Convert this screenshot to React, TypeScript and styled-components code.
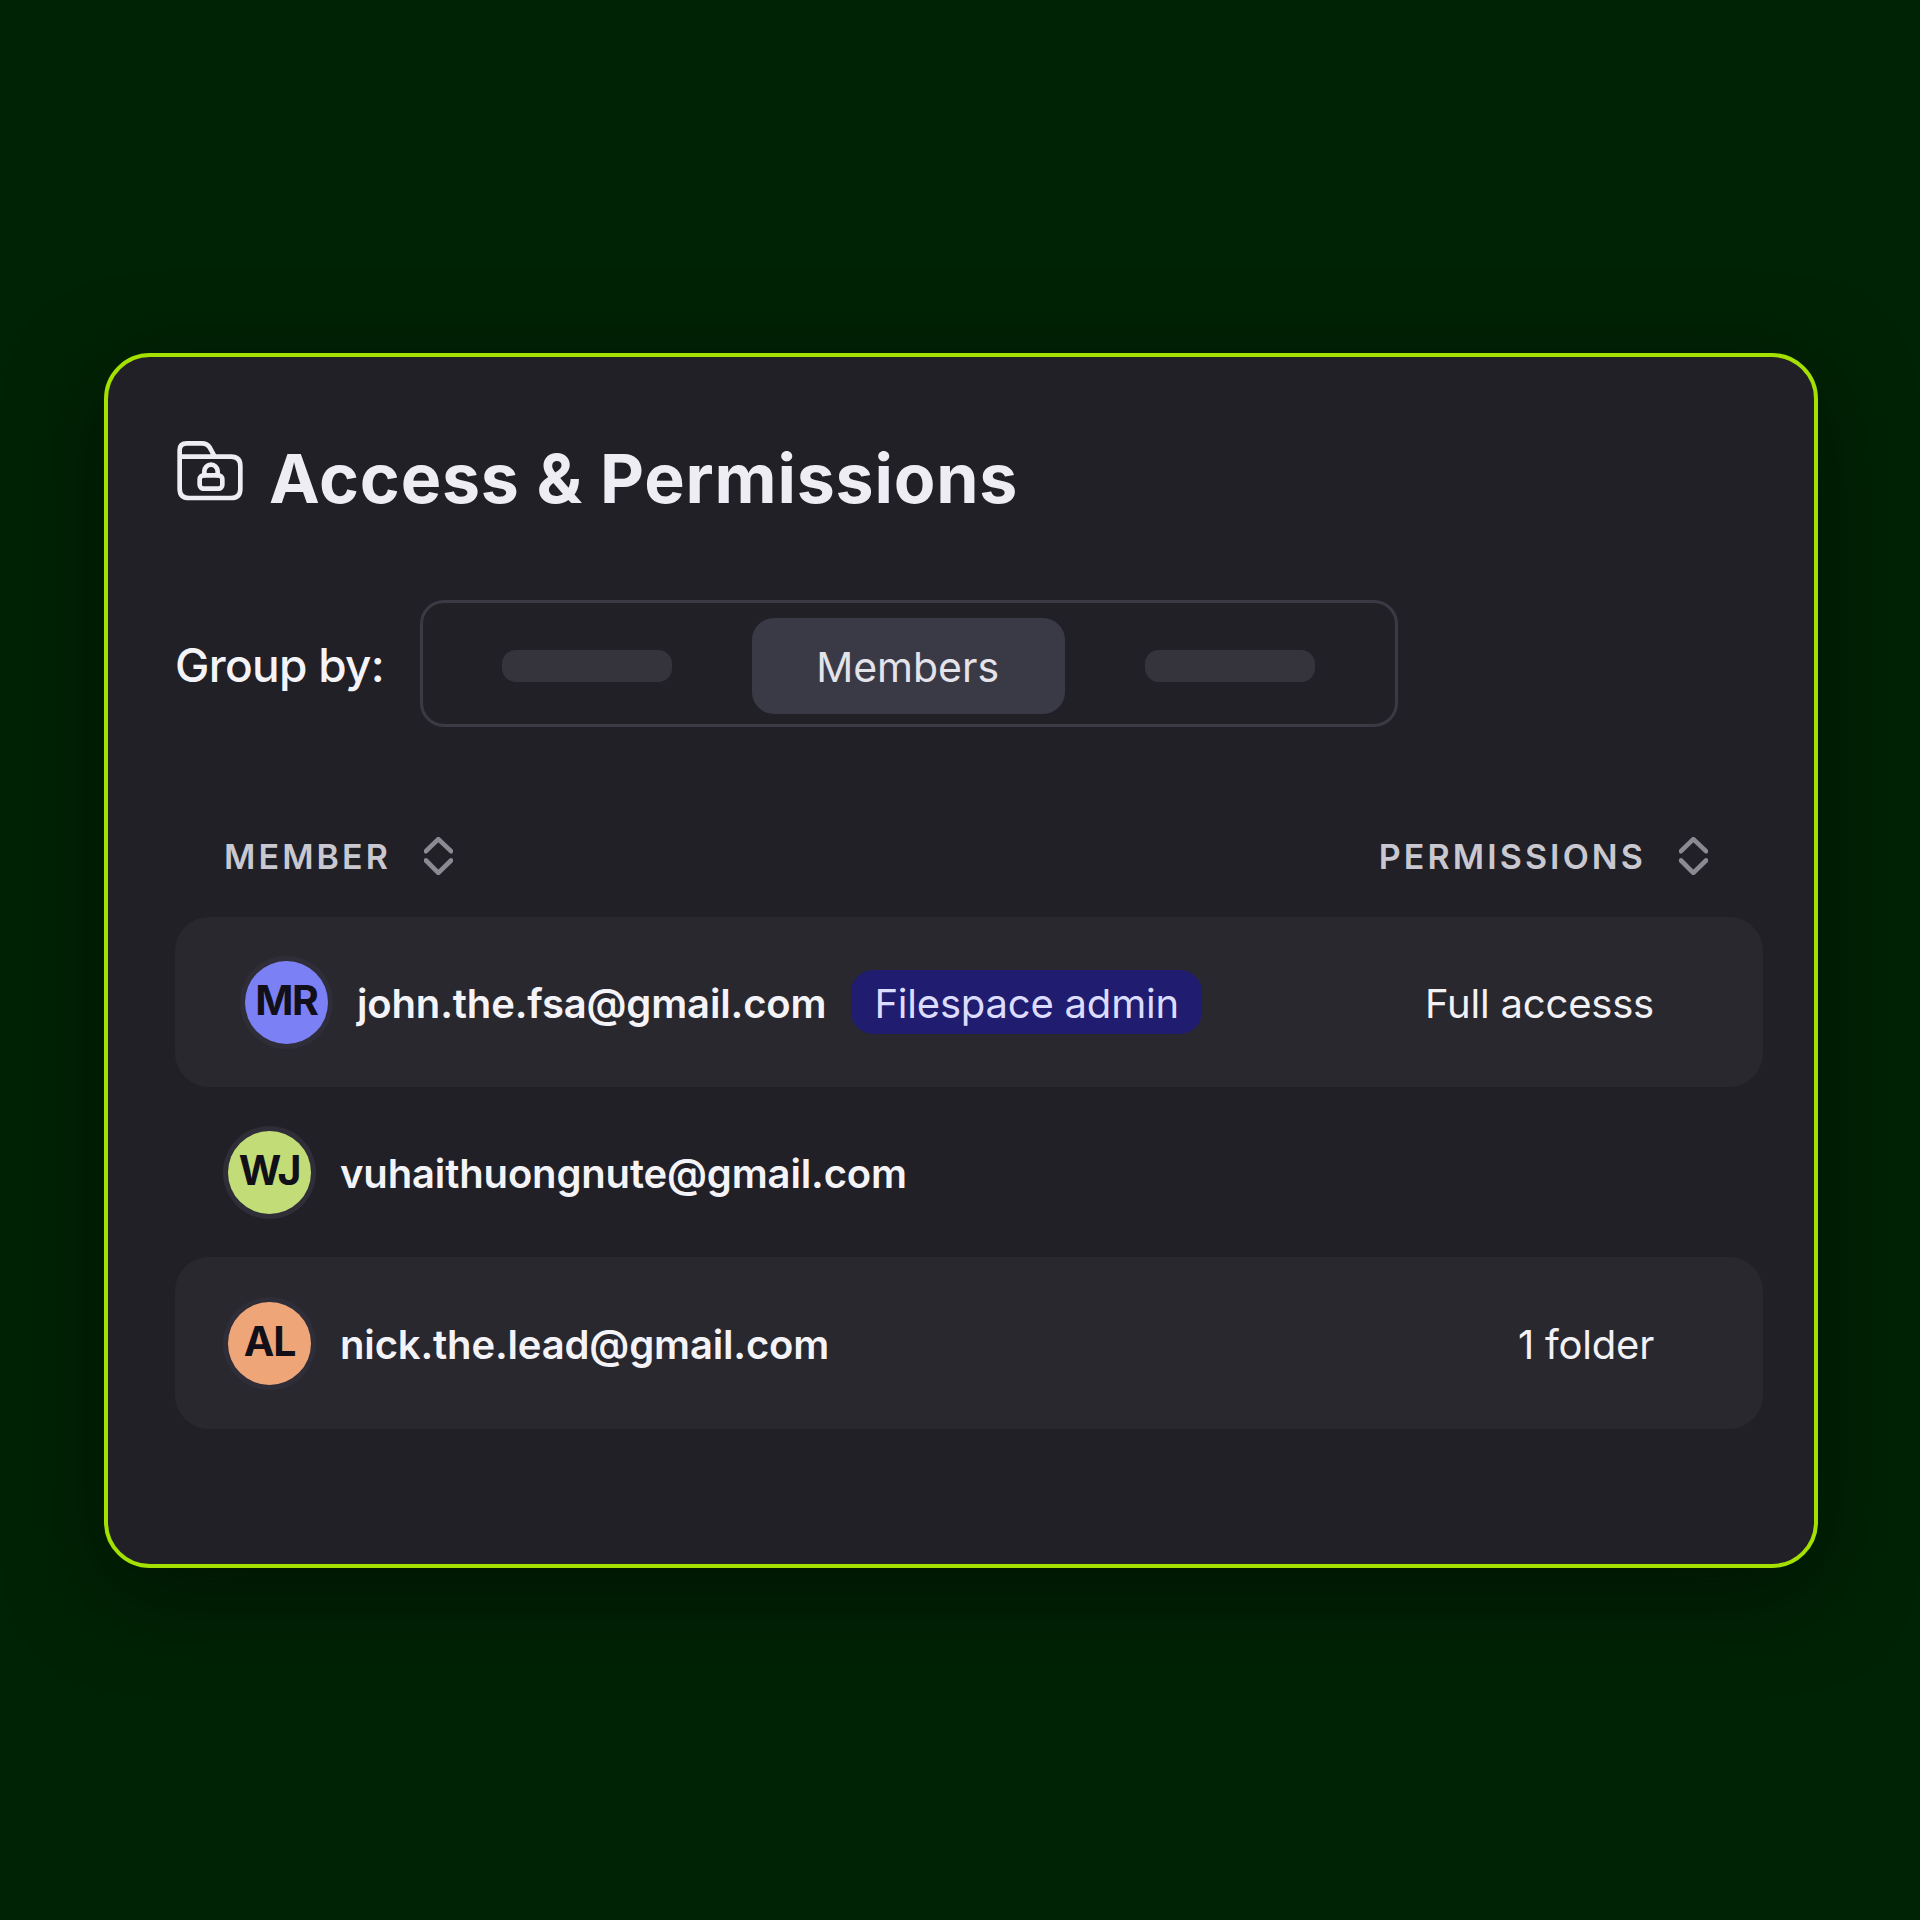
import React from "react";
import styled, { createGlobalStyle } from "styled-components";

const Global = createGlobalStyle`
  html, body { margin: 0; padding: 0; background: #002305; }
  * { box-sizing: border-box; }
`;

const Page = styled.div`
  width: 1920px;
  height: 1920px;
  padding: 353px 102px 0 104px;
  background: #002305;
  font-family: Inter, "Liberation Sans", sans-serif;
  overflow: hidden;
`;

const Card = styled.section`
  height: 1215px;
  padding: 75px 51px 0 67px;
  background: #222027;
  border: 4px solid #a4e000;
  border-radius: 46px;
  box-shadow: 0 24px 90px rgba(0, 10, 0, 0.55);
`;

const TitleRow = styled.header`
  display: flex;
  align-items: flex-start;
  gap: 25px;
  height: 90px;
`;

const IconSlot = styled.span`
  display: block;
  flex: none;
  margin: 8px 0 0 2px;
  line-height: 0;
`;

const Title = styled.h1`
  margin: 0;
  font-size: 68px;
  line-height: 93px;
  font-weight: 700;
  letter-spacing: 0.8px;
  color: #efedf4;
  white-space: nowrap;
`;

const GroupRow = styled.div`
  display: flex;
  align-items: center;
  gap: 36px;
  margin-top: 78px;
`;

const GroupLabel = styled.span`
  padding-top: 2px;
  font-size: 46px;
  font-weight: 500;
  letter-spacing: -0.7px;
  color: #f4f3f7;
  white-space: nowrap;
`;

const Tabs = styled.div`
  display: flex;
  align-items: center;
  gap: 80px;
  width: 978px;
  height: 127px;
  padding: 5px 79px 0 79px;
  border: 3px solid #3a3944;
  border-radius: 24px;
`;

const Ghost = styled.span`
  width: 170px;
  height: 32px;
  border-radius: 14px;
  background: #35343d;
`;

const ActiveTab = styled.span`
  display: flex;
  align-items: center;
  justify-content: center;
  width: 313px;
  height: 96px;
  padding: 2px 2px 0 0;
  border-radius: 22px;
  background: #3a3a47;
  font-size: 41px;
  color: #e4e3ea;
`;

const HeaderRow = styled.div`
  display: flex;
  align-items: center;
  justify-content: space-between;
  height: 60px;
  margin-top: 99px;
  padding: 0 55px 0 49px;
`;

const HeaderCell = styled.div`
  display: flex;
  align-items: center;
  gap: 33px;
  font-size: 34px;
  font-weight: 600;
  letter-spacing: 3.1px;
  color: #c9c8d0;
`;

const Rows = styled.div`
  display: flex;
  flex-direction: column;
  margin-top: 31px;
`;

const Row = styled.div<{ $shaded?: boolean; $inset?: number; $height?: number }>`
  display: flex;
  align-items: center;
  height: ${(p) => p.$height ?? 170}px;
  padding: 0 109px 0 ${(p) => p.$inset ?? 53}px;
  border-radius: 34px;
  background: ${(p) => (p.$shaded ? "#2a282f" : "transparent")};
`;

const Avatar = styled.span<{ $color: string }>`
  display: flex;
  align-items: center;
  justify-content: center;
  flex: none;
  width: 83px;
  height: 83px;
  padding-bottom: 4px;
  border-radius: 50%;
  background: ${(p) => p.$color};
  box-shadow: 0 0 0 5px #2f2e38;
  font-size: 41px;
  font-weight: 700;
  letter-spacing: -1.2px;
  color: #110f18;
`;

const Email = styled.span`
  margin-left: 29px;
  padding-top: 2px;
  font-size: 40px;
  font-weight: 600;
  letter-spacing: -0.15px;
  color: #f4f3f8;
  white-space: nowrap;
`;

const Badge = styled.span`
  display: flex;
  align-items: center;
  height: 64px;
  margin-left: 25px;
  padding: 2px 23px 0;
  border-radius: 22px;
  background: #201c70;
  font-size: 40px;
  letter-spacing: -0.2px;
  color: #dcdcff;
  white-space: nowrap;
`;

const Access = styled.span`
  margin-left: auto;
  padding-top: 2px;
  font-size: 40px;
  letter-spacing: -0.2px;
  color: #f2f1f6;
  white-space: nowrap;
`;

const FolderLock = () => (
  <svg width="67" height="62" viewBox="50 62 201 186" fill="none" stroke="#efedf4" strokeWidth="14" strokeLinecap="round" strokeLinejoin="round">
    <path d="M58 120V92Q58 72 80 72H125Q140 72 148 84L163 112H212Q240 112 240 140V208Q240 236 212 236H86Q58 236 58 208V112H163" />
    <rect x="118" y="168" width="68" height="40" rx="12" />
    <path d="M132 168V156a20 20 0 0 1 40 0V168" />
  </svg>
);

const Sorter = () => (
  <svg width="29" height="38" viewBox="70 50 87 113" fill="none" stroke="#8b8a93" strokeWidth="14" strokeLinecap="round" strokeLinejoin="round">
    <path d="M76 92L113 56L151 92" />
    <path d="M76 120L113 157L151 120" />
  </svg>
);

export default function App() {
  return (
    <Page>
      <Global />
      <Card>
        <TitleRow>
          <IconSlot><FolderLock /></IconSlot>
          <Title>Access &amp; Permissions</Title>
        </TitleRow>
        <GroupRow>
          <GroupLabel>Group by:</GroupLabel>
          <Tabs>
            <Ghost />
            <ActiveTab>Members</ActiveTab>
            <Ghost />
          </Tabs>
        </GroupRow>
        <HeaderRow>
          <HeaderCell>MEMBER <Sorter /></HeaderCell>
          <HeaderCell>PERMISSIONS <Sorter /></HeaderCell>
        </HeaderRow>
        <Rows>
          <Row $shaded $inset={70}>
            <Avatar $color="#7b81f5">MR</Avatar>
            <Email>john.the.fsa@gmail.com</Email>
            <Badge>Filespace admin</Badge>
            <Access>Full accesss</Access>
          </Row>
          <Row>
            <Avatar $color="#c2dc78">WJ</Avatar>
            <Email>vuhaithuongnute@gmail.com</Email>
          </Row>
          <Row $shaded $height={172}>
            <Avatar $color="#eea678">AL</Avatar>
            <Email>nick.the.lead@gmail.com</Email>
            <Access>1 folder</Access>
          </Row>
        </Rows>
      </Card>
    </Page>
  );
}
